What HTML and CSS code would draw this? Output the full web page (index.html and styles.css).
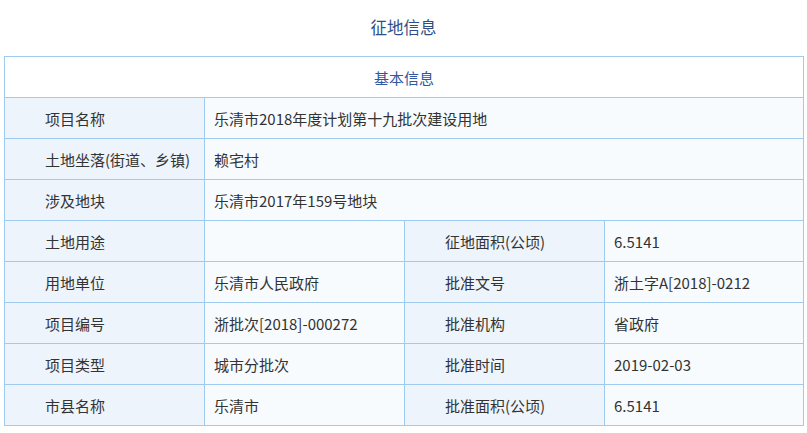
FILE: index.html
```html
<!DOCTYPE html>
<html lang="zh-CN">
<head>
<meta charset="utf-8">
<title>征地信息</title>
<link rel="stylesheet" href="styles.css">
</head>
<body>
<div class="page">
  <h1 class="title">征地信息</h1>
  <table class="info">
    <colgroup>
      <col class="c1"><col class="c2"><col class="c3"><col class="c4">
    </colgroup>
    <tbody>
      <tr><th class="head" colspan="4">基本信息</th></tr>
      <tr><td class="label">项目名称</td><td class="value" colspan="3">乐清市2018年度计划第十九批次建设用地</td></tr>
      <tr><td class="label">土地坐落(街道、乡镇)</td><td class="value" colspan="3">赖宅村</td></tr>
      <tr><td class="label">涉及地块</td><td class="value" colspan="3">乐清市2017年159号地块</td></tr>
      <tr><td class="label">土地用途</td><td class="value"></td><td class="label">征地面积(公顷)</td><td class="value">6.5141</td></tr>
      <tr><td class="label">用地单位</td><td class="value">乐清市人民政府</td><td class="label">批准文号</td><td class="value">浙土字A[2018]-0212</td></tr>
      <tr><td class="label">项目编号</td><td class="value">浙批次[2018]-000272</td><td class="label">批准机构</td><td class="value">省政府</td></tr>
      <tr><td class="label">项目类型</td><td class="value">城市分批次</td><td class="label">批准时间</td><td class="value">2019-02-03</td></tr>
      <tr><td class="label">市县名称</td><td class="value">乐清市</td><td class="label">批准面积(公顷)</td><td class="value">6.5141</td></tr>
    </tbody>
  </table>
</div>
</body>
</html>
```
FILE: styles.css
```css
html, body {
  margin: 0;
  padding: 0;
  background: #ffffff;
}
body {
  font-family: "Noto Sans CJK SC", "Noto Sans", sans-serif;
  color: #333333;
}
.page {
  padding: 0 4px;
}
.title {
  margin: 0;
  height: 56px;
  line-height: 54px;
  text-align: center;
  font-size: 16.5px;
  font-weight: normal;
  color: #2e4f86;
}
.info {
  width: 799px;
  border-collapse: collapse;
  table-layout: fixed;
  font-size: 15px;
}
.c1, .c2, .c3 { width: 200px; }
.c4 { width: 199px; }
.info th, .info td {
  border: 1px solid #9fcbf0;
  height: 41px;
  padding: 0;
  box-sizing: border-box;
  font-weight: normal;
  vertical-align: middle;
  white-space: nowrap;
}
.head {
  background: #ffffff;
  color: #2e58a0;
  text-align: center;
}
.label {
  background: #edf4fb;
  padding-left: 40px !important;
  text-align: left;
}
.value {
  background: #f7fbfe;
  padding-left: 9px !important;
  text-align: left;
}
```
